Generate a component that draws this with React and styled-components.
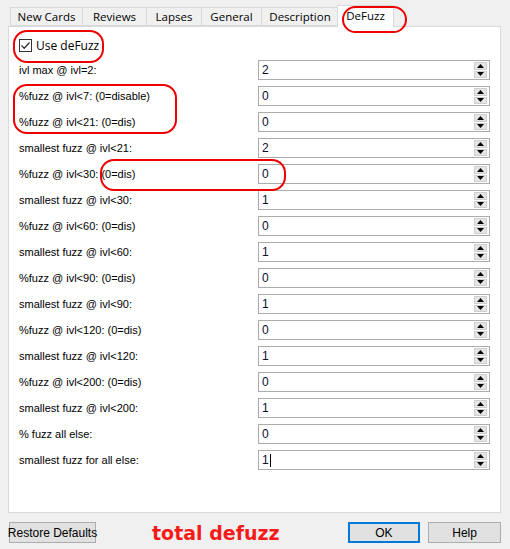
import { Fragment } from 'react';
import styled, { createGlobalStyle } from 'styled-components';

const GlobalStyle = createGlobalStyle`
  html, body {
    margin: 0;
    padding: 0;
    background: #f0f0f0;
  }
  body {
    font-family: 'Liberation Sans', Arial, sans-serif;
    font-size: 12px;
    color: #000;
  }
`;

const tabs = [
  { label: 'New Cards', width: 73 },
  { label: 'Reviews', width: 65 },
  { label: 'Lapses', width: 56 },
  { label: 'General', width: 61 },
  { label: 'Description', width: 78 },
  { label: 'DeFuzz', width: 57, active: true },
];

const rows = [
  ['ivl max @ ivl=2:', '2'],
  ['%fuzz @ ivl<7: (0=disable)', '0'],
  ['%fuzz @ ivl<21: (0=dis)', '0'],
  ['smallest fuzz @ ivl<21:', '2'],
  ['%fuzz @ ivl<30: (0=dis)', '0'],
  ['smallest fuzz @ ivl<30:', '1'],
  ['%fuzz @ ivl<60: (0=dis)', '0'],
  ['smallest fuzz @ ivl<60:', '1'],
  ['%fuzz @ ivl<90: (0=dis)', '0'],
  ['smallest fuzz @ ivl<90:', '1'],
  ['%fuzz @ ivl<120: (0=dis)', '0'],
  ['smallest fuzz @ ivl<120:', '1'],
  ['%fuzz @ ivl<200: (0=dis)', '0'],
  ['smallest fuzz @ ivl<200:', '1'],
  ['% fuzz all else:', '0'],
  ['smallest fuzz for all else:', '1'],
];

const Page = styled.div`
  position: relative;
  width: 510px;
  height: 549px;
  box-sizing: border-box;
  padding: 5px 9px 0 8px;
  background: #f0f0f0;
  overflow: hidden;
`;

const TabBar = styled.div`
  display: flex;
  align-items: flex-end;
  height: 21px;
  padding-left: 2px;
  position: relative;
  z-index: 1;
`;

const Tab = styled.div`
  box-sizing: border-box;
  width: ${(p) => p.$w}px;
  height: ${(p) => (p.$active ? 22 : 19)}px;
  margin: ${(p) => (p.$active ? '0 -2px -1px -2px' : '0')};
  margin-left: ${(p) => (p.$first ? 0 : p.$active ? -2 : -1)}px;
  border: 1px solid #d9d9d9;
  border-bottom: ${(p) => (p.$active ? 'none' : '1px solid #d9d9d9')};
  background: ${(p) => (p.$active ? '#fff' : '#f0f0f0')};
  display: flex;
  align-items: ${(p) => (p.$active ? 'flex-start' : 'center')};
  padding-top: ${(p) => (p.$active ? 2 : 0)}px;
  justify-content: center;
  font-family: 'Open Sans', 'Liberation Sans', sans-serif;
  font-size: 11.5px;
  color: #000;
`;

const Pane = styled.div`
  box-sizing: border-box;
  width: 493px;
  height: 487px;
  border: 1px solid #d9d9d9;
  background: #fff;
  padding: 12px 10px 0 10px;
`;

const CheckRow = styled.label`
  display: flex;
  align-items: center;
  gap: 4px;
  height: 13px;
  font-family: 'Open Sans', 'Liberation Sans', sans-serif;
  font-size: 12px;
  margin-bottom: 8px;
`;

const Box = styled.span`
  box-sizing: border-box;
  width: 13px;
  height: 13px;
  border: 1px solid #333;
  background: #fff;
  display: flex;
  align-items: center;
  justify-content: center;
`;

const Grid = styled.div`
  display: grid;
  grid-template-columns: 239px 232px;
  grid-auto-rows: 20px;
  row-gap: 6px;
  align-items: center;
`;

const Label = styled.div`
  font-size: 11px;
  white-space: nowrap;
`;

const Spin = styled.div`
  box-sizing: border-box;
  height: 20px;
  border: 1px solid #ababab;
  background: #fff;
  display: flex;
  align-items: center;
  padding: 1px 2px 1px 3px;
`;

const Value = styled.span`
  flex: 1;
  font-size: 12px;
  color: #0a0a30;
  display: flex;
  align-items: center;
`;

const Caret = styled.span`
  display: inline-block;
  width: 1px;
  height: 13px;
  background: #000;
  margin-left: 1px;
`;

const Arrows = styled.div`
  display: flex;
  flex-direction: column;
  width: 13px;
  height: 16px;
  gap: 1px;
`;

const ArrowBtn = styled.div`
  flex: 1;
  box-sizing: border-box;
  background: #e5e5e5;
  border: 1px solid #cfcfcf;
  display: flex;
  align-items: center;
  justify-content: center;
`;

const Footer = styled.div`
  display: flex;
  align-items: center;
  height: 37px;
  padding-top: 1px;
`;

const Button = styled.div`
  box-sizing: border-box;
  height: 21px;
  width: ${(p) => p.$w}px;
  margin-left: ${(p) => p.$ml || 0}px;
  border: ${(p) => (p.$primary ? '2px solid #0078d7' : '1px solid #adadad')};
  background: #e1e1e1;
  display: flex;
  align-items: center;
  justify-content: center;
  font-family: 'Liberation Sans', Arial, sans-serif;
  font-size: 12px;
  white-space: nowrap;
`;

const Note = styled.div`
  margin-left: 56px;
  width: 140px;
  font-family: 'DejaVu Sans', sans-serif;
  font-weight: bold;
  font-size: 19px;
  color: #f51b1b;
  white-space: nowrap;
`;

const Mark = styled.div`
  position: absolute;
  border: 2px solid #e00;
  border-radius: 14px;
  pointer-events: none;
  z-index: 2;
`;

const marks = [
  { left: 13, top: 30, width: 87, height: 29 },
  { left: 342, top: 6, width: 61, height: 23 },
  { left: 13, top: 84, width: 160, height: 46 },
  { left: 100, top: 159, width: 182, height: 28 },
];

const Up = () => (
  <svg width="7" height="4" viewBox="0 0 7 4">
    <path d="M3.5 0 L7 4 L0 4 Z" fill="#000" />
  </svg>
);

const Down = () => (
  <svg width="7" height="4" viewBox="0 0 7 4">
    <path d="M0 0 L7 0 L3.5 4 Z" fill="#000" />
  </svg>
);

export default function App() {
  return (
    <>
      <GlobalStyle />
      <Page>
        <TabBar>
          {tabs.map((t, i) => (
            <Tab key={t.label} $w={t.width} $active={t.active} $first={i === 0}>
              {t.label}
            </Tab>
          ))}
        </TabBar>
        <Pane>
          <CheckRow>
            <Box>
              <svg width="11" height="11" viewBox="0 0 11 11">
                <path d="M1.5 5.5 L4.2 8.2 L9.5 2.5" stroke="#333" strokeWidth="1.3" fill="none" />
              </svg>
            </Box>
            Use deFuzz
          </CheckRow>
          <Grid>
            {rows.map(([label, value], i) => (
              <Fragment key={i}>
                <Label>{label}</Label>
                <Spin>
                  <Value>
                    {value}
                    {i === rows.length - 1 && <Caret />}
                  </Value>
                  <Arrows>
                    <ArrowBtn><Up /></ArrowBtn>
                    <ArrowBtn><Down /></ArrowBtn>
                  </Arrows>
                </Spin>
              </Fragment>
            ))}
          </Grid>
        </Pane>
        <Footer>
          <Button $w={87} $ml={1}>Restore Defaults</Button>
          <Note>total defuzz</Note>
          <Button $w={73} $ml={56} $primary>OK</Button>
          <Button $w={73} $ml={8}>Help</Button>
        </Footer>
        {marks.map((m, i) => (
          <Mark key={i} style={{ left: m.left, top: m.top, width: m.width, height: m.height }} />
        ))}
      </Page>
    </>
  );
}
